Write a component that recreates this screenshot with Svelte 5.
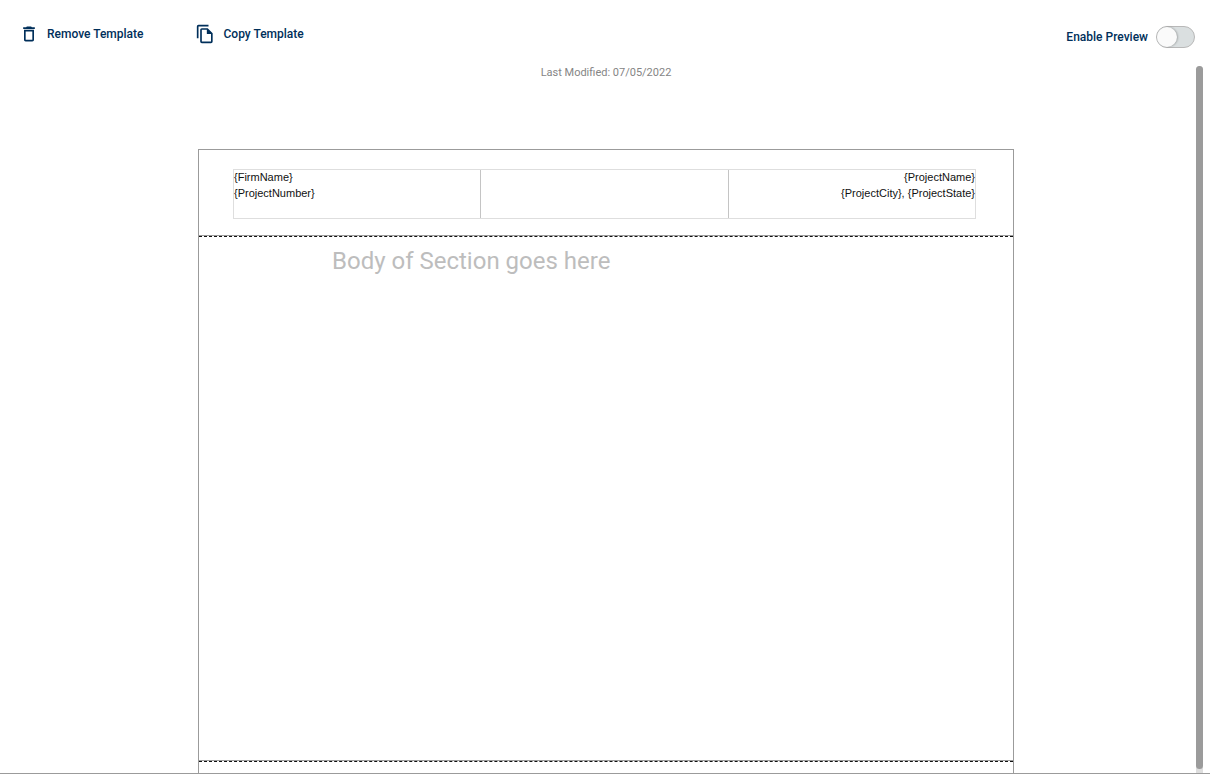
<script>
	let previewEnabled = $state(false);

	const modified = '07/05/2022';
	const headerCells = [
		{ align: 'left', lines: ['{FirmName}', '{ProjectNumber}'] },
		{ align: 'center', lines: [] },
		{ align: 'right', lines: ['{ProjectName}', '{ProjectCity}, {ProjectState}'] }
	];
</script>

<div class="editor">
	<header class="toolbar">
		<div class="actions">
			<button type="button" class="action">
				<svg viewBox="0 0 24 24" aria-hidden="true">
					<path d="M6 19c0 1.1.9 2 2 2h8c1.1 0 2-.9 2-2V7H6v12zM8 9h8v10H8V9zm7.5-5l-1-1h-5l-1 1H5v2h14V4z" />
				</svg>
				Remove Template
			</button>
			<button type="button" class="action">
				<svg viewBox="1 0 24 24" aria-hidden="true">
					<path d="M16 1H4a2 2 0 0 0-2 2v14h2V3h12zM15 5H8a2 2 0 0 0-2 2v14a2 2 0 0 0 2 2h11a2 2 0 0 0 2-2V11zM8 21V7h6v5h5v9z" fill-rule="evenodd" />
				</svg>
				Copy Template
			</button>
		</div>
		<label class="preview">
			Enable Preview
			<input type="checkbox" role="switch" bind:checked={previewEnabled} />
		</label>
	</header>

	<div class="workspace">
		<main class="content">
			<p class="modified">Last Modified: {modified}</p>

			<div class="paper">
				<section class="page-header">
					<div class="cells">
						{#each headerCells as cell}
							<div class="cell {cell.align}">
								{#each cell.lines as line}
									<div>{line}</div>
								{/each}
							</div>
						{/each}
					</div>
				</section>
				<section class="page-body">Body of Section goes here</section>
				<section class="page-footer"></section>
			</div>
		</main>
		<div class="scrollbar"><div class="thumb"></div></div>
	</div>
</div>

<style>
	:global(body) {
		margin: 0;
		background: #fff;
	}

	.editor {
		display: flex;
		flex-direction: column;
		box-sizing: border-box;
		height: 100vh;
		border-bottom: 1px solid #9b9b9b;
		font-family: Roboto, sans-serif;
		color: #002f5a;
	}

	.toolbar {
		display: flex;
		justify-content: space-between;
		box-sizing: border-box;
		height: 66px;
		padding: 24px 15px 0 19px;
	}

	.actions {
		display: flex;
		align-items: flex-start;
		gap: 52px;
	}

	.action {
		display: flex;
		align-items: center;
		gap: 8px;
		padding: 0;
		border: 0;
		background: none;
		color: inherit;
		font: 500 12px/20px Roboto, sans-serif;
		cursor: pointer;
	}

	.action svg {
		width: 20px;
		height: 20px;
		fill: currentColor;
	}

	.preview {
		display: flex;
		align-items: center;
		align-self: flex-start;
		gap: 8px;
		padding-top: 2px;
		font-size: 12px;
		font-weight: 500;
		line-height: 22px;
	}

	.preview input {
		appearance: none;
		box-sizing: border-box;
		width: 39px;
		height: 22px;
		margin: 0;
		border: 1px solid #b8b8b8;
		border-radius: 11px;
		background: #dadfe0;
		cursor: pointer;
	}

	.preview input::before {
		content: '';
		display: block;
		width: 20px;
		height: 20px;
		border-radius: 50%;
		background: #fafafa;
		box-shadow: 1px 0 2px rgba(0, 0, 0, 0.25);
	}

	.preview input:checked {
		background: #002f5a;
	}

	.preview input:checked::before {
		margin-left: auto;
	}

	.workspace {
		display: flex;
		flex: 1;
		min-height: 0;
		padding: 0 7px 0 16px;
	}

	.content {
		flex: 1;
		overflow: hidden;
	}

	.modified {
		margin: 0 0 69px;
		color: #858585;
		font-size: 11px;
		line-height: 14px;
		text-align: center;
	}

	.paper {
		box-sizing: border-box;
		max-width: 816px;
		margin: 0 auto;
		border: 1px solid #9b9b9b;
	}

	.page-header {
		padding: 19px 37px 16px 34px;
		border-bottom: 1px solid #9b9b9b;
	}

	.cells {
		display: grid;
		grid-template-columns: repeat(3, 1fr);
		box-sizing: border-box;
		height: 50px;
		border: 1px solid #dedede;
		color: #111;
		font: 11px/14px "Liberation Sans", Arial, sans-serif;
	}

	.cell {
		display: flex;
		flex-direction: column;
		gap: 2px;
	}

	.left {
		border-right: 1px solid #c4c4c4;
	}

	.right {
		border-left: 1px solid #c4c4c4;
		text-align: right;
	}

	.page-body {
		box-sizing: border-box;
		height: 525px;
		padding: 10px 133px;
		border-top: 1px dashed #111;
		border-bottom: 1px solid #9b9b9b;
		color: #bdbdbd;
		font-size: 24px;
		line-height: 28px;
	}

	.page-footer {
		height: 86px;
		border-top: 1px dashed #111;
	}

	.scrollbar {
		width: 7px;
		padding-bottom: 4px;
		box-sizing: border-box;
		background: #dedede;
		border-radius: 4px 4px 0 0;
	}

	.thumb {
		height: 100%;
		border-radius: 4px;
		background: #9b9b9b;
	}
</style>
